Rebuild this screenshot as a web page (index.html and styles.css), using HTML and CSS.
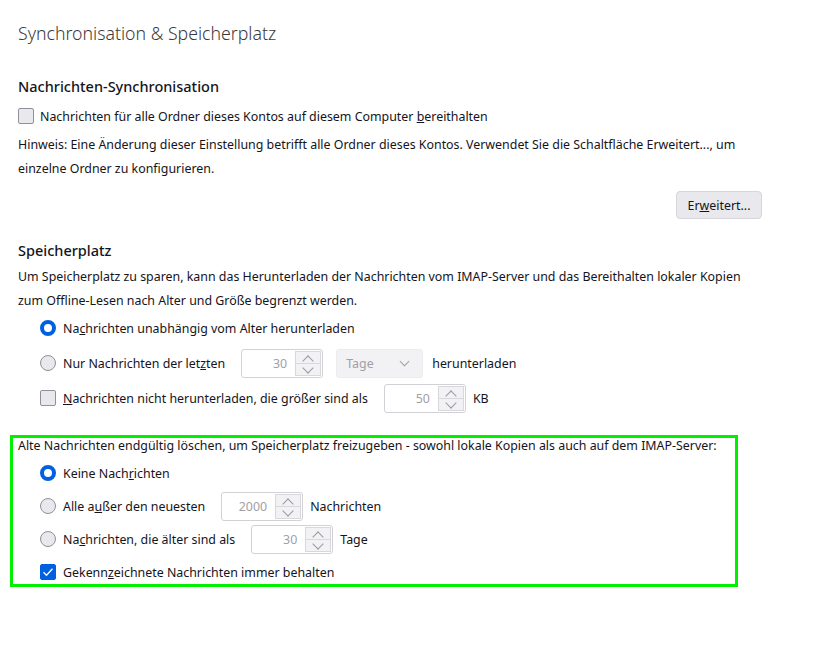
FILE: index.html
```html
<!DOCTYPE html>
<html lang="de">
<head>
<meta charset="utf-8">
<title>Synchronisation &amp; Speicherplatz</title>
<link rel="stylesheet" href="styles.css">
</head>
<body>
<main class="page">
  <h1 class="page-title">Synchronisation &amp; Speicherplatz</h1>

  <section class="group sync">
    <h2 class="group-title">Nachrichten-Synchronisation</h2>
    <label class="row">
      <span class="check"></span>
      <span>Nachrichten für alle Ordner dieses Kontos auf diesem Computer <u>b</u>ereithalten</span>
    </label>
    <p class="note">Hinweis: Eine Änderung dieser Einstellung betrifft alle Ordner dieses Kontos. Verwendet Sie die Schaltfläche Erweitert..., um einzelne Ordner zu konfigurieren.</p>
    <div class="actions">
      <button class="btn" type="button">Er<u>w</u>eitert...</button>
    </div>
  </section>

  <section class="group storage">
    <h2 class="group-title">Speicherplatz</h2>
    <p class="note">Um Speicherplatz zu sparen, kann das Herunterladen der Nachrichten vom IMAP-Server und das Bereithalten lokaler Kopien zum Offline-Lesen nach Alter und Größe begrenzt werden.</p>
    <div class="options">
      <div class="row"><span class="radio on"></span><span>Na<u>c</u>hrichten unabhängig vom Alter herunterladen</span></div>
      <div class="row">
        <span class="radio"></span><span class="lbl">Nur Nachrichten der let<u>z</u>ten</span>
        <span class="spin"><span class="num">30</span><span class="arrows"><span class="up"></span><span class="down"></span></span></span>
        <span class="select">Tage<span class="caret"></span></span>
        <span class="after">herunterladen</span>
      </div>
      <div class="row">
        <span class="check"></span><span class="lbl"><u>N</u>achrichten nicht herunterladen, die größer sind als</span>
        <span class="spin"><span class="num">50</span><span class="arrows"><span class="up"></span><span class="down"></span></span></span>
        <span class="after">KB</span>
      </div>
    </div>
  </section>

  <section class="purge">
    <p class="purge-title">Alte Nachrichten endgültig löschen, um Speicherplatz freizugeben - sowohl lokale Kopien als auch auf dem IMAP-Server:</p>
    <div class="options">
      <div class="row"><span class="radio on"></span><span>Keine Nach<u>r</u>ichten</span></div>
      <div class="row">
        <span class="radio"></span><span class="lbl">Alle a<u>u</u>ßer den neuesten</span>
        <span class="spin"><span class="num">2000</span><span class="arrows"><span class="up"></span><span class="down"></span></span></span>
        <span class="after">Nachrichten</span>
      </div>
      <div class="row">
        <span class="radio"></span><span class="lbl">Na<u>c</u>hrichten, die älter sind als</span>
        <span class="spin"><span class="num">30</span><span class="arrows"><span class="up"></span><span class="down"></span></span></span>
        <span class="after">Tage</span>
      </div>
      <div class="row">
        <span class="check on"><svg viewBox="0 0 16 16" width="16" height="16"><path d="M3.5 8.2l3 3 6-6.4" fill="none" stroke="#fff" stroke-width="1.3"/></svg></span>
        <span>Gekenn<u>z</u>eichnete Nachrichten immer behalten</span>
      </div>
    </div>
  </section>
</main>
</body>
</html>
```

FILE: styles.css
```css
* { box-sizing: border-box; }

html, body {
  margin: 0;
  background: #fff;
}

body {
  font-family: "Noto Sans", "Open Sans", sans-serif;
  font-size: 12.4px;
  color: #15141a;
}

.page {
  width: 837px;
  padding: 20px 0 0 18px;
}

.page-title {
  margin: 0;
  font-size: 17.7px;
  font-weight: 300;
  line-height: 26px;
  color: #3a3940;
}

.group-title {
  margin: 0;
  font-size: 14.5px;
  font-weight: 500;
  line-height: 22px;
}

.sync { margin-top: 29px; }
.sync .group-title { margin-bottom: 8px; }

.row {
  display: flex;
  align-items: center;
  height: 24px;
}

.row + .row { margin-top: 11px; }

.sync > .row { height: 22px; }

.note {
  margin: 6px 0 0;
  width: 745px;
  line-height: 24px;
}

.actions {
  width: 744px;
  display: flex;
  justify-content: flex-end;
  margin-top: 10px;
}

.btn {
  width: 86px;
  height: 28px;
  font: inherit;
  color: #15141a;
  background: #e9e9ed;
  border: 1px solid #d5d5db;
  border-radius: 4px;
  padding: 0;
}

.storage { margin-top: 20px; }
.storage .note { margin-top: 4px; }

.options { padding-left: 22px; }
.storage .options { margin-top: 3px; }

.check, .radio {
  flex: none;
  width: 16px;
  height: 16px;
  margin-right: 7px;
  background: #e9e9ed;
  border: 1px solid #8f8f9d;
}

.check { border-radius: 2px; }
.check.on {
  background: #0061e0;
  border-color: #0061e0;
  display: flex;
}
.check.on svg { margin: -1px; }

.radio { border-radius: 50%; }
.radio.on {
  background: #fff;
  border: 4px solid #0061e0;
}

.sync .check { margin-right: 6px; }

.lbl { margin-right: 16px; }

.spin {
  flex: none;
  display: flex;
  width: 82px;
  height: 29px;
  border: 1px solid #d2d2d6;
  border-radius: 3px;
  background: #fff;
  color: #a0a0a6;
}

.num {
  flex: 1;
  text-align: right;
  line-height: 27px;
  padding-right: 8px;
}

.arrows {
  width: 27px;
  display: flex;
  flex-direction: column;
  padding: 1px 1px 1px 0;
}

.up, .down {
  flex: 1;
  position: relative;
  background: #f2f2f4;
  border: 1px solid #d8d8dc;
}
.down { border-top: none; }

.up::after, .down::after {
  content: "";
  position: absolute;
  left: 50%;
  width: 7px;
  height: 7px;
  border-left: 1px solid #9a9aa2;
  border-top: 1px solid #9a9aa2;
}
.up::after { top: 5px; transform: translateX(-50%) rotate(45deg); }
.down::after { top: 0; transform: translateX(-50%) rotate(225deg); }

.select {
  flex: none;
  position: relative;
  width: 87px;
  height: 29px;
  margin-left: 13px;
  padding-left: 9px;
  line-height: 27px;
  border-radius: 3px;
  background: #f2f2f4;
  border: 1px solid #ececef;
  color: #a0a0a6;
}

.caret {
  position: absolute;
  right: 14px;
  top: 8px;
  width: 7px;
  height: 7px;
  border-right: 1px solid #a0a0a6;
  border-bottom: 1px solid #a0a0a6;
  transform: rotate(45deg);
}

.after { margin-left: 7px; }
.select + .after { margin-left: 9px; }

.purge {
  margin: 25px 0 0 -8px;
  width: 728px;
  height: 152px;
  border: 3px solid #00f000;
  padding: 0 0 0 5px;
}

.purge-title {
  margin: 0;
  line-height: 16px;
}

.purge .options { padding-left: 22px; margin-top: 7px; }
.purge .row + .row { margin-top: 9px; }
```
